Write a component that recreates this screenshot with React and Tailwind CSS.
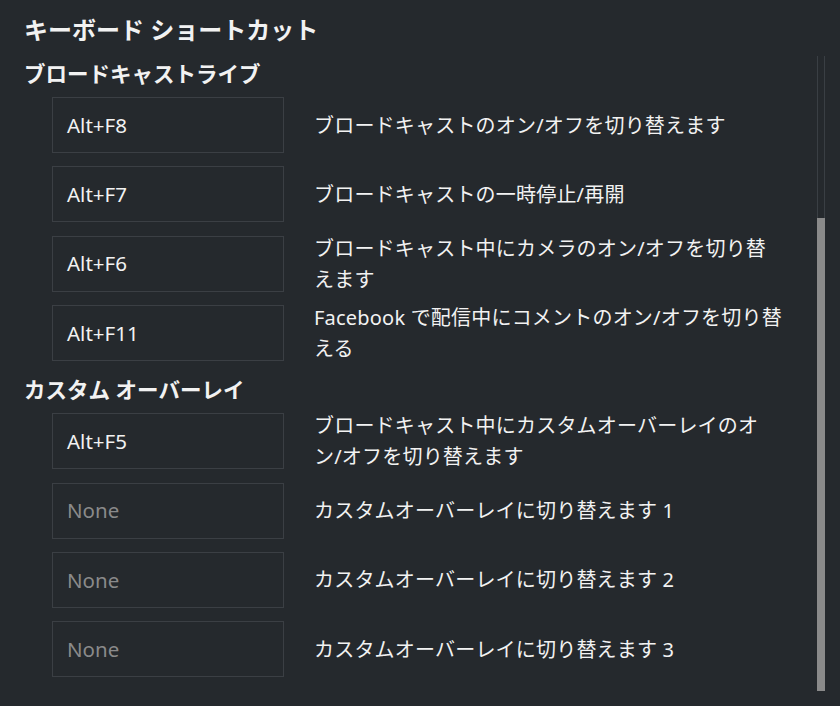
import React from 'react';

const sections = [
  {
    title: 'ブロードキャストライブ',
    rows: [
      { key: 'Alt+F8', desc: ['ブロードキャストのオン/オフを切り替えます'] },
      { key: 'Alt+F7', desc: ['ブロードキャストの一時停止/再開'] },
      { key: 'Alt+F6', desc: ['ブロードキャスト中にカメラのオン/オフを切り替', 'えます'] },
      { key: 'Alt+F11', desc: ['Facebook で配信中にコメントのオン/オフを切り替', 'える'] },
    ],
  },
  {
    title: 'カスタム オーバーレイ',
    rows: [
      { key: 'Alt+F5', desc: ['ブロードキャスト中にカスタムオーバーレイのオ', 'ン/オフを切り替えます'] },
      { key: null, desc: ['カスタムオーバーレイに切り替えます 1'] },
      { key: null, desc: ['カスタムオーバーレイに切り替えます 2'] },
      { key: null, desc: ['カスタムオーバーレイに切り替えます 3'] },
    ],
  },
];

export default function App() {
  return (
    <div
      className="w-[840px] h-[706px] bg-[#25292d] text-[#f2f2f2] flex overflow-hidden"
      style={{ fontFamily: '"Noto Sans", "Noto Sans CJK JP", sans-serif' }}
    >
      <div className="flex-1 pl-[24px] pr-[16px] pt-[14px]">
        <h1 className="h-[32px] leading-[32px] text-[24px] font-bold">キーボード ショートカット</h1>

        {sections.map((section, i) => (
          <div key={section.title} className={i === 0 ? 'mt-[14px]' : 'mt-[15px]'}>
            <h2 className="h-[28px] leading-[28px] text-[21.5px] font-bold">{section.title}</h2>
            <div className="mt-[9px] flex flex-col gap-[13.4px]">
              {section.rows.map((row, j) => (
                <div key={j} className="h-[56px] flex items-center">
                  <div className="ml-[28px] w-[232px] h-[56px] shrink-0 border border-[#3b3f44] flex items-center px-[14px] text-[20.5px]">
                    {row.key ? (
                      <span className="text-[#f2f2f2]">{row.key}</span>
                    ) : (
                      <span className="text-[#8a8a8a]">None</span>
                    )}
                  </div>
                  <p className="ml-[30px] flex-1 text-[20px] leading-[31px] whitespace-nowrap tracking-[0.2px]">
                    {row.desc.map((line, k) => (
                      <React.Fragment key={k}>
                        {k > 0 && <br />}
                        {line}
                      </React.Fragment>
                    ))}
                  </p>
                </div>
              ))}
            </div>
          </div>
        ))}
      </div>

      {/* scrollbar */}
      <div className="w-[8px] mr-[15px] pt-[56px] pb-[15px] flex flex-col">
        <div className="flex-1 flex flex-col border-x border-[#3a3f44]">
          <div className="h-[162px]" />
          <div className="flex-1 bg-[#8a8a8a] -mx-px" />
        </div>
      </div>
    </div>
  );
}
